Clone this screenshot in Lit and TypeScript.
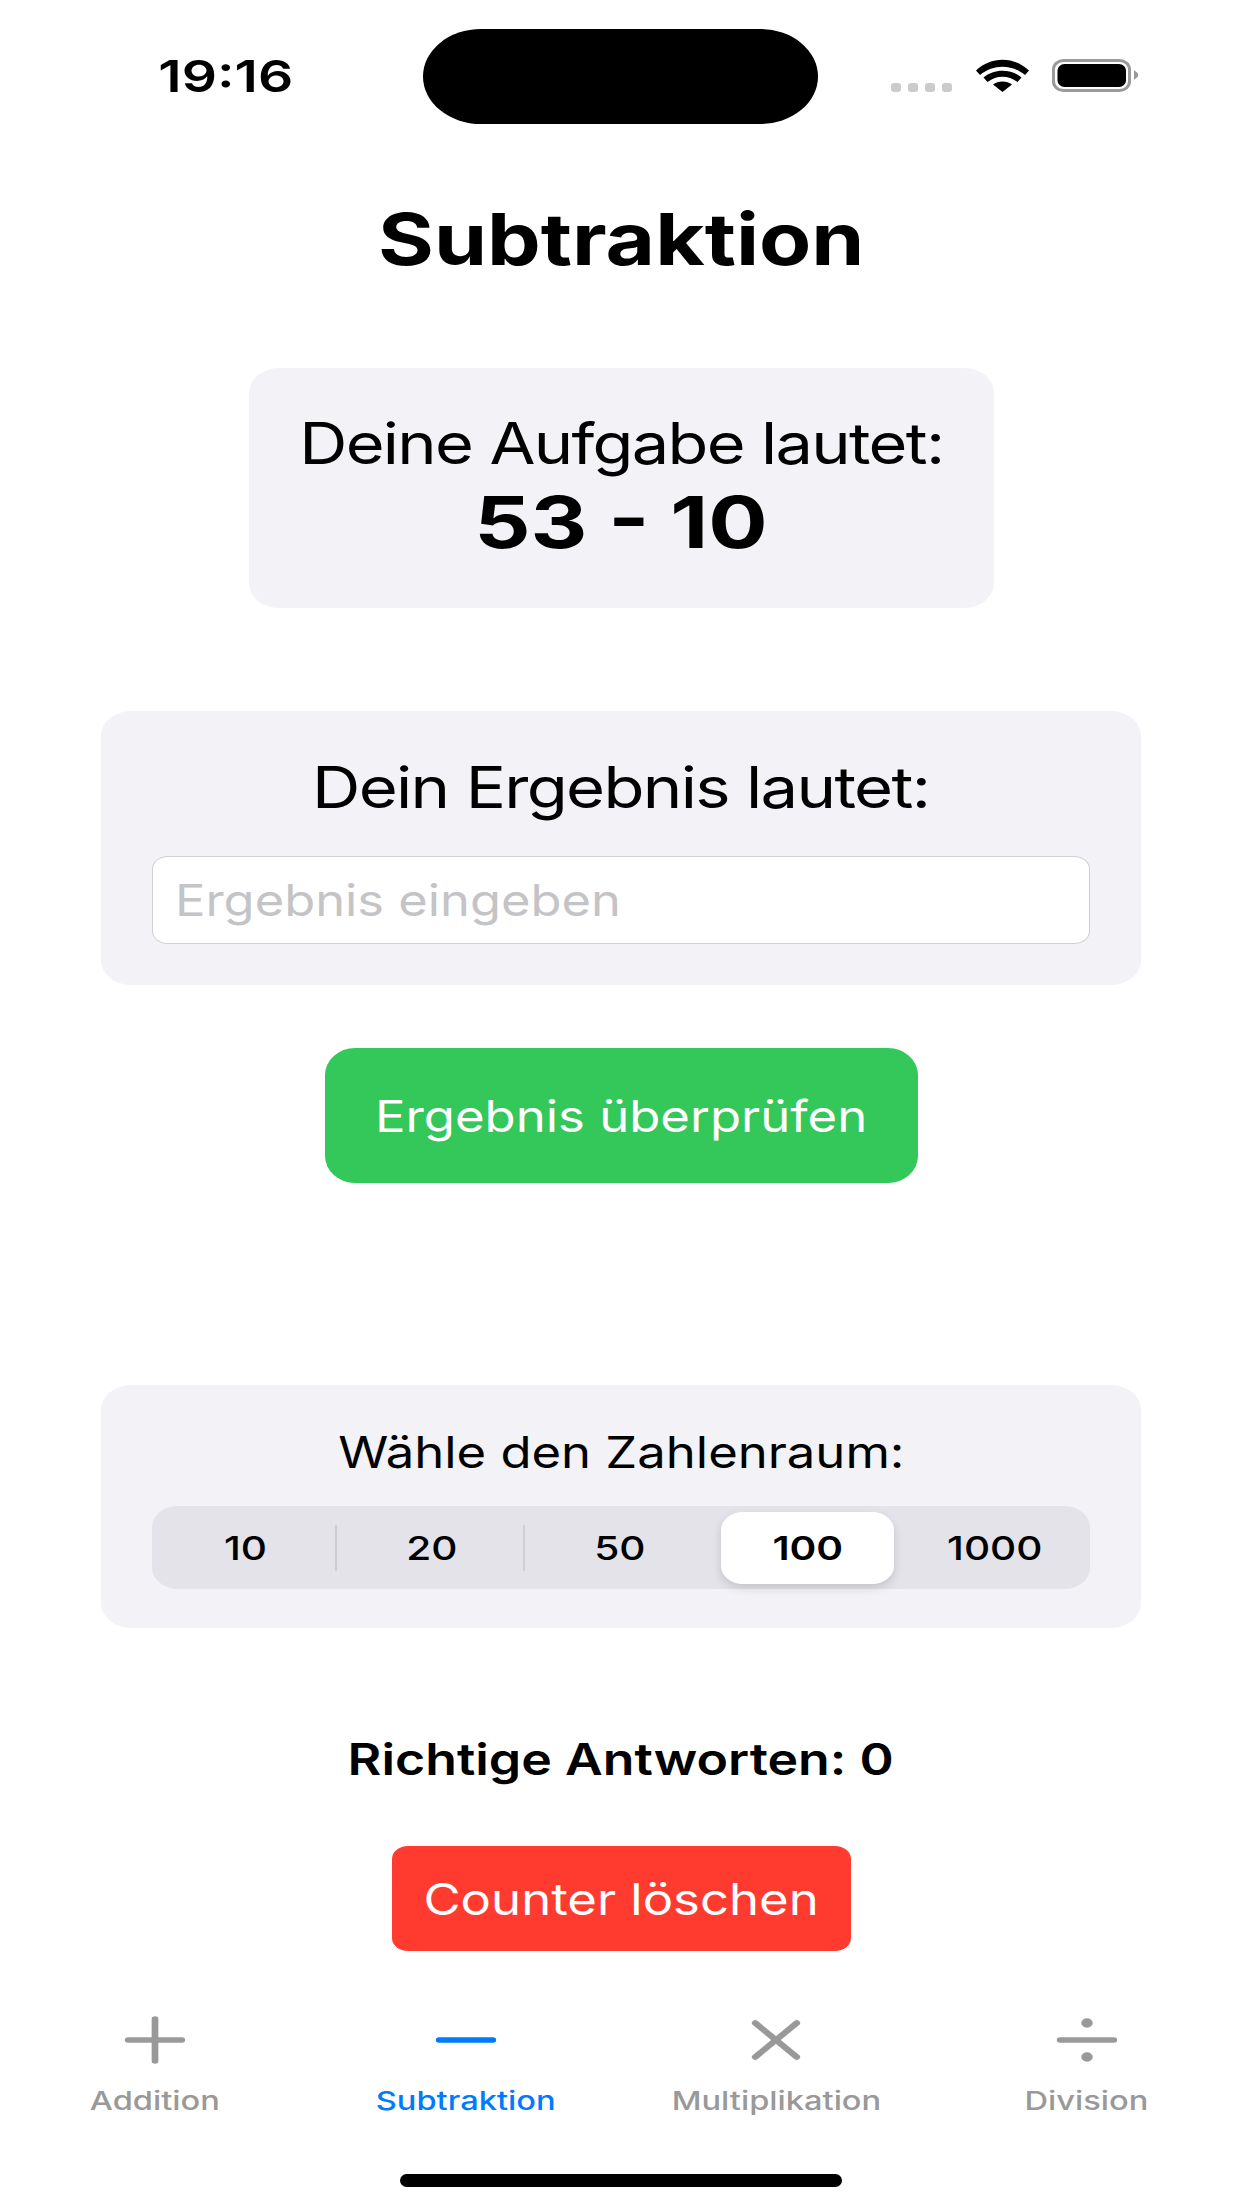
import { LitElement, html, css, svg } from "lit";
import { customElement } from "lit/decorators.js";

const tabs = [
  { label: "Addition", active: false, icon: svg`<path d="M-22 0H22M0 -21V21" />` },
  { label: "Subtraktion", active: true, icon: svg`<path d="M-22 0H22" />` },
  { label: "Multiplikation", active: false, icon: svg`<path d="M-17 -17L17 17M17 -17L-17 17" />` },
  { label: "Division", active: false, icon: svg`<path d="M-22 0H22" /><circle cy="-17" r="4.700" class="dot"/><circle cy="17" r="4.700" class="dot"/>` },
];

@customElement("app-root")
export class AppRoot extends LitElement {
  static styles = css`
    :host { display: block; width: 1242px; height: 2208px; background: #fff; overflow: hidden; font-family: Inter, "Liberation Sans", sans-serif; color: #000; }
    .page { display: flex; flex-direction: column; align-items: center; height: 2208px; position: relative; }
    .t { display: inline-block; transform: scaleX(1.2); white-space: nowrap; }
    .status { align-self: stretch; height: 95px; margin-top: 29px; display: flex; align-items: flex-start; position: relative; }
    .time { position: absolute; left: 160px; top: 22px; width: 131px; text-align: center; font-size: 44px; font-weight: 600; line-height: 50px; }
    .time .t { transform: scaleX(1.254); }
    .island { position: absolute; left: 423px; top: 0; width: 395px; height: 95px; background: #000; border-radius: 58px / 47.5px; }
    .sys { position: absolute; left: 891px; top: 30px; display: block; }
    h1 { margin: 71px 0 0; font-size: 72px; font-weight: 700; line-height: 88px; height: 88px; text-align: center; }
    h1 .t { transform: scaleX(1.185); }
    .card { background: #f2f2f7; box-sizing: border-box; display: flex; flex-direction: column; align-items: center; }
    .task { width: 745px; height: 240px; margin-top: 85px; border-radius: 30px / 25px; padding-top: 42px; }
    .task .a, .answer .a { font-size: 57px; line-height: 68px; letter-spacing: -0.025em; }
    .task .a .t { transform: scaleX(1.17); }
    .answer .a .t { transform: scaleX(1.175); }
    .task .b { font-size: 72px; font-weight: 700; line-height: 86px; margin-top: 1px; }
    .task .b .t { transform: scaleX(1.224); }
    .answer { width: 1040px; height: 274px; margin-top: 103px; border-radius: 30px / 25px; padding-top: 43px; }
    .input { width: 938px; height: 88px; box-sizing: border-box; margin-top: 34px; background: #fff; border: 1.5px solid #d0d0d5; border-radius: 16px / 13px; display: flex; align-items: center; padding-left: 22px; font-size: 44px; color: #c4c4c6; }
    .input .t { transform-origin: left center; transform: scaleX(1.15); }
    .check { width: 593px; height: 135px; margin-top: 63px; background: #34c759; color: #fff; border-radius: 30px / 27px; display: flex; align-items: center; justify-content: center; font-size: 44px; }
    .check .t { transform: scaleX(1.155); }
    .range { width: 1040px; height: 243px; margin-top: 202px; border-radius: 30px / 25px; padding-top: 40px; }
    .range .a { font-size: 44px; line-height: 54px; }
    .range .a .t { transform: scaleX(1.154); }
    .seg { width: 938px; height: 83px; margin-top: 27px; background: #e3e3e9; border-radius: 26px / 21px; display: grid; grid-template-columns: 186px 188px 188px 186px 190px; align-items: center; box-sizing: border-box; }
    .opt { height: 72px; display: flex; align-items: center; justify-content: center; font-size: 33px; font-weight: 500; position: relative; }
    .opt .t { transform: scaleX(1.23); }
    .opt.sep::after { content: ""; position: absolute; right: 1px; top: 13px; height: 46px; width: 2px; background: #cdcdd2; }
    .opt.on { background: #fff; border-radius: 22px / 18px; box-shadow: 0 4px 10px rgba(0,0,0,.14); font-weight: 600; margin: 0 6px 0 7px; }
    .score { margin-top: 104px; font-size: 44px; font-weight: 600; line-height: 54px; }
    .score .t { transform: scaleX(1.179); }
    .clear { width: 459px; height: 105px; margin-top: 60px; background: #ff3b30; color: #fff; border-radius: 16px / 13px; display: flex; align-items: center; justify-content: center; font-size: 44px; }
    .clear .t { transform: scaleX(1.155); }
    .tabs { align-self: stretch; display: grid; grid-template-columns: repeat(4, 1fr); margin-top: 48px; }
    .tab { display: flex; flex-direction: column; align-items: center; color: #999; font-size: 26px; font-weight: 500; line-height: 32px; }
    .tab .t { transform: scaleX(1.255); }
    .tab.on { color: #007aff; }
    .tab svg { display: block; width: 62px; height: 82px; fill: none; stroke: currentColor; stroke-width: 5.5; stroke-linecap: round; margin-bottom: 4px; }
    .tab svg .dot { fill: currentColor; stroke: none; }
    .home { position: absolute; left: 400px; top: 2174px; width: 442px; height: 13px; background: #000; border-radius: 7px; }
  `;

  render() {
    const opts = ["10", "20", "50", "100", "1000"];
    return html`<div class="page">
      <div class="status">
        <div class="time"><span class="t">19:16</span></div>
        <div class="island"></div>
        <svg class="sys" width="250" height="36" viewBox="0 0 250 36">
          <g fill="#cbcbcb">
            <rect x="0" y="24" width="10" height="9" rx="3"/><rect x="17" y="24" width="10" height="9" rx="3"/>
            <rect x="34" y="24" width="10" height="9" rx="3"/><rect x="51" y="24" width="10" height="9" rx="3"/>
          </g>
          <path d="M85 11.500C100 -3 123 -3 138 11.500L134 16C121 5 102 5 89 16Z" fill="#000"/>
          <path d="M92.500 18.500C103 9.500 120 9.500 130.500 18.500L126.500 23C117 16 106 16 96.500 23Z" fill="#000"/>
          <path d="M102 25.500C107 21.500 116 21.500 121 25.500L111.500 33Z" fill="#000"/>
          <rect x="162.500" y="1.500" width="76" height="30" rx="10" ry="9" fill="none" stroke="#9a9a9a" stroke-width="3"/>
          <rect x="166.500" y="5" width="68.500" height="23" rx="7" ry="6.500" fill="#000"/>
          <path d="M243 11V21L247 17.500V14.500Z" fill="#9a9a9a"/>
        </svg>
      </div>
      <h1><span class="t">Subtraktion</span></h1>
      <div class="card task">
        <div class="a"><span class="t">Deine Aufgabe lautet:</span></div>
        <div class="b"><span class="t">53 - 10</span></div>
      </div>
      <div class="card answer">
        <div class="a"><span class="t">Dein Ergebnis lautet:</span></div>
        <div class="input"><span class="t">Ergebnis eingeben</span></div>
      </div>
      <div class="check"><span class="t">Ergebnis überprüfen</span></div>
      <div class="card range">
        <div class="a"><span class="t">Wähle den Zahlenraum:</span></div>
        <div class="seg">
          ${opts.map((o, i) => html`<div class="opt ${o === "100" ? "on" : ""} ${i < 2 ? "sep" : ""}"><span class="t">${o}</span></div>`)}
        </div>
      </div>
      <div class="score"><span class="t">Richtige Antworten: 0</span></div>
      <div class="clear"><span class="t">Counter löschen</span></div>
      <div class="tabs">
        ${tabs.map((t) => html`<div class="tab ${t.active ? "on" : ""}">
          <svg viewBox="0 0 62 82"><g transform="translate(31 41) scale(1.22 1)">${t.icon}</g></svg>
          <span class="t">${t.label}</span>
        </div>`)}
      </div>
      <div class="home"></div>
    </div>`;
  }
}
